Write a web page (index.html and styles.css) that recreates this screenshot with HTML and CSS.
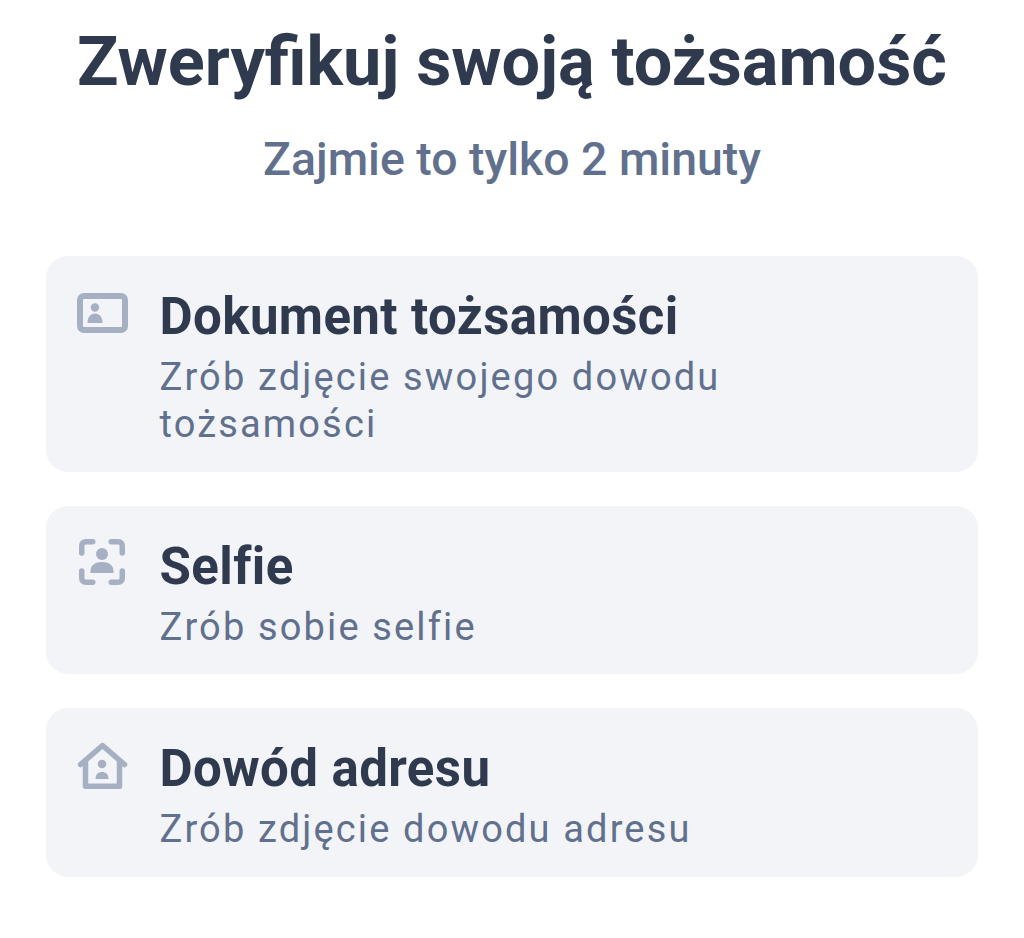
FILE: index.html
```html
<!DOCTYPE html>
<html lang="pl">
  <head>
    <meta charset="UTF-8" />
    <meta name="viewport" content="width=device-width, initial-scale=1.0" />
    <title>Weryfikacja</title>
    <link rel="stylesheet" href="styles.css">
  </head>
  <body>
    <h1>Zweryfikuj swoją tożsamość</h1>
    <p class="subtitle">Zajmie to tylko 2 minuty</p>

    <div class="steps">
      <div class="step step-id">
        <svg class="icon" viewBox="0 0 52 40" width="52" height="40">
          <rect x="3" y="3" width="45" height="34" rx="4" fill="none" stroke="#a6b0c3" stroke-width="6" />
          <circle cx="18" cy="14.500" r="4.200" fill="#a6b0c3" />
          <path d="M10.500 30c0-6 3-9.500 7.500-9.500s7.500 3.500 7.500 9.500z" fill="#a6b0c3" />
        </svg>
        <div class="step-text">
          <h3>Dokument tożsamości</h3>
          <p>Zrób zdjęcie swojego dowodu tożsamości</p>
        </div>
      </div>

      <div class="step step-selfie">
        <svg class="icon" viewBox="0 0 52 46" width="52" height="46">
          <g fill="none" stroke="#a6b0c3" stroke-width="5.500" stroke-linecap="round">
            <path d="M4.750 14V7a4 4 0 0 1 4-4.250h7" />
            <path d="M34.250 2.750h7a4 4 0 0 1 4 4.250v7" />
            <path d="M4.750 32v7a4 4 0 0 0 4 4.250h7" />
            <path d="M34.250 43.250h7a4 4 0 0 0 4-4.250v-7" />
          </g>
          <circle cx="25" cy="15" r="6" fill="#a6b0c3" />
          <path d="M13.500 34v-2c0-6 5-9 11.500-9s11.500 3 11.500 9v2z" fill="#a6b0c3" />
        </svg>
        <div class="step-text">
          <h3>Selfie</h3>
          <p>Zrób sobie selfie</p>
        </div>
      </div>

      <div class="step step-address">
        <svg class="icon" viewBox="0 0 52 47" width="52" height="47">
          <path d="M3.500 22.500L25.500 3.500l22 19" fill="none" stroke="#a6b0c3" stroke-width="5.500" stroke-linecap="round" stroke-linejoin="round" />
          <path d="M8.500 18v26.250h34V18" fill="none" stroke="#a6b0c3" stroke-width="5.500" stroke-linejoin="round" />
          <circle cx="25" cy="22" r="4.300" fill="#a6b0c3" />
          <path d="M18.500 37c0-4.500 2.500-7 6.500-7s6.500 2.500 6.500 7z" fill="#a6b0c3" />
        </svg>
        <div class="step-text">
          <h3>Dowód adresu</h3>
          <p>Zrób zdjęcie dowodu adresu</p>
        </div>
      </div>
    </div>
  </body>
</html>
```

FILE: styles.css
```css
* {
  box-sizing: border-box;
  font-family: Roboto, sans-serif;
}

body {
  margin: 0;
  padding: 24px 46px 0;
  background: #fff;
}

h1 {
  margin: 0;
  font-size: 68.400px;
  line-height: 76px;
  font-weight: 700;
  color: #2f3a4e;
  text-align: center;
  white-space: nowrap;
}

.subtitle {
  margin: 30px 0 0;
  font-size: 46.400px;
  line-height: 58px;
  font-weight: 500;
  color: #60708d;
  text-align: center;
}

.steps {
  margin-top: 68px;
  display: flex;
  flex-direction: column;
  gap: 34px;
}

.step {
  display: flex;
  align-items: flex-start;
  gap: 30.500px;
  padding: 31px 40px 23.500px 31px;
  background: #f2f4f8;
  border-radius: 22px;
}

.icon {
  flex-shrink: 0;
}

.step-id .icon {
  margin-top: 6px;
}

.step-selfie .icon {
  margin-top: 2.500px;
}

.step-address .icon {
  margin-top: 3px;
}

h3 {
  margin: 0 0 7px;
  font-size: 51px;
  line-height: 60px;
  font-weight: 700;
  letter-spacing: 0.400px;
  color: #2f3a4e;
}

.step-text p {
  margin: 0;
  font-size: 38px;
  line-height: 47px;
  letter-spacing: 2.150px;
  color: #60708d;
}
```
